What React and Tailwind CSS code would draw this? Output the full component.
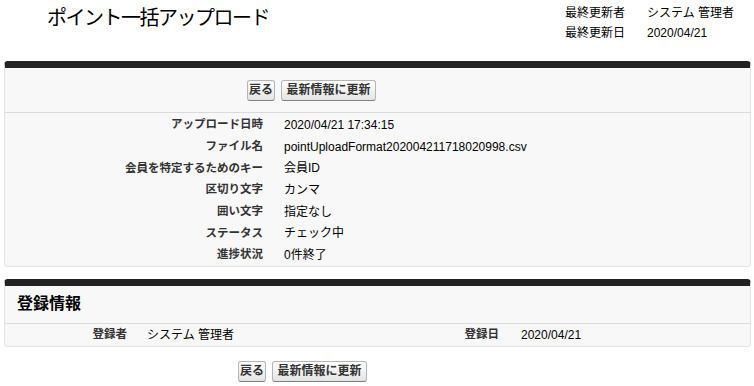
import React from "react";

const rows = [
  ["アップロード日時", "2020/04/21 17:34:15"],
  ["ファイル名", "pointUploadFormat202004211718020998.csv"],
  ["会員を特定するためのキー", "会員ID"],
  ["区切り文字", "カンマ"],
  ["囲い文字", "指定なし"],
  ["ステータス", "チェック中"],
  ["進捗状況", "0件終了"],
];

function Btn({ children, w }) {
  return (
    <button
      className={`${w} h-[21px] flex items-center justify-center border border-[#b5b5b5] border-b-[#7f7f7f] rounded-[3px] bg-linear-to-b from-white to-[#e4e4e4] text-[12px] font-bold text-[#333] leading-none`}
    >
      {children}
    </button>
  );
}

function Buttons() {
  return (
    <div className="flex items-center gap-[6px]">
      <Btn w="w-[28px]">戻る</Btn>
      <Btn w="w-[95px]">最新情報に更新</Btn>
    </div>
  );
}

export default function App() {
  return (
    <div className="w-[754px] h-[386px] bg-white text-black overflow-hidden font-['Liberation_Sans','Noto_Sans_CJK_JP',sans-serif]">
      {/* Header */}
      <div className="flex h-[61px]">
        <div className="flex-1 pl-[47px] pt-[4px] text-[20px] leading-[28px] tracking-[-1.5px]">
          ポイント一括アップロード
        </div>
        <div className="w-[189px] pt-[3px] text-[12px]">
          <div className="flex h-[20px] items-center">
            <div className="w-[82px]">最終更新者</div>
            <div>システム 管理者</div>
          </div>
          <div className="flex h-[20px] items-center">
            <div className="w-[82px]">最終更新日</div>
            <div>2020/04/21</div>
          </div>
        </div>
      </div>

      {/* Upload detail panel */}
      <div className="ml-[4px] mr-[3px] bg-[#f8f8f8] border border-[#e3e3e3] border-t-[7px] border-t-[#222] rounded-[4px]">
        <div className="h-[45px] flex items-center border-b border-[#dbdbdb]">
          <div className="w-[242px]" />
          <Buttons />
        </div>
        <div className="pt-[1px]">
          {rows.map(([label, value]) => (
            <div key={label} className="flex items-center h-[21.7px]">
              <div className="w-[268px] pr-[10px] text-right text-[11.5px] font-bold text-[#333]">
                {label}
              </div>
              <div className="pl-[11px] text-[12px]">{value}</div>
            </div>
          ))}
        </div>
      </div>

      {/* Registration panel */}
      <div className="mt-[12px] ml-[4px] mr-[3px] bg-[#f8f8f8] border border-[#e3e3e3] border-t-[7px] border-t-[#222] rounded-[4px]">
        <div className="h-[38px] flex items-center pl-[12px] border-b border-[#dbdbdb] text-[16px] font-bold">
          登録情報
        </div>
        <div className="flex items-center h-[22px] text-[12px]">
          <div className="w-[132px] pr-[10px] text-right font-bold text-[#333] text-[11.5px]">登録者</div>
          <div className="w-[240px] pl-[10px]">システム 管理者</div>
          <div className="w-[132px] pr-[10px] text-right font-bold text-[#333] text-[11.5px]">登録日</div>
          <div className="pl-[12px]">2020/04/21</div>
        </div>
      </div>

      {/* Bottom buttons */}
      <div className="mt-[14px] pl-[238px]">
        <Buttons />
      </div>
    </div>
  );
}
